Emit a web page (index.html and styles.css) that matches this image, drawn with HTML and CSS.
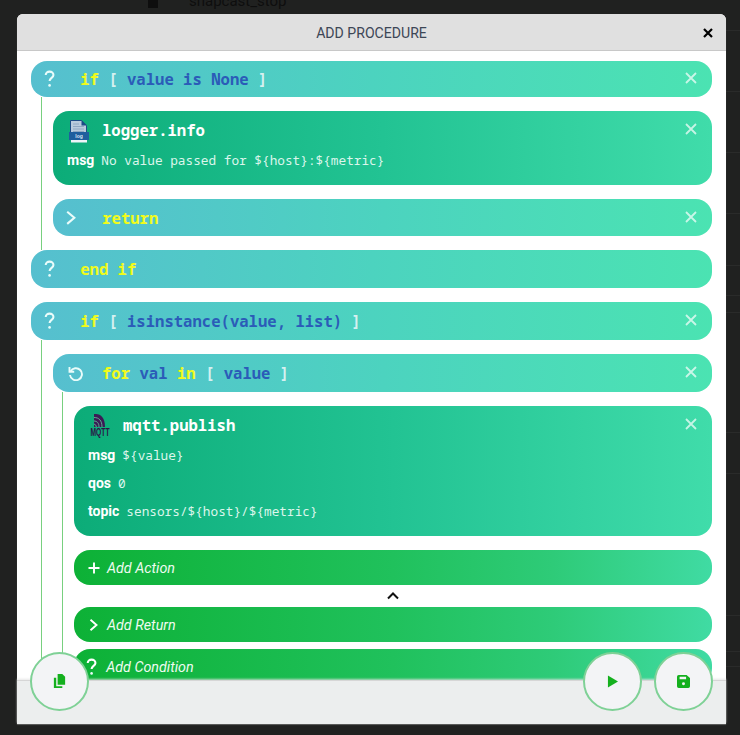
FILE: index.html
```html
<!DOCTYPE html>
<html lang="en">
<head>
    <meta charset="UTF-8">
    <title>Add Procedure</title>
    <link rel="stylesheet" href="styles.css">
</head>
<body>
    <div class="backdrop">
        <div class="backdrop-row first">
            <span class="backdrop-icon"></span>
            <span class="backdrop-name">snapcast_stop</span>
        </div>
        <div class="backdrop-row r61"></div>
        <div class="backdrop-row r61"></div>
        <div class="backdrop-row r61"></div>
        <div class="backdrop-row r52"></div>
        <div class="backdrop-row r30"></div>
        <div class="backdrop-row r17"></div>
        <div class="backdrop-row r120"></div>
        <div class="backdrop-row r41"></div>
        <div class="backdrop-row r142"></div>
        <div class="backdrop-row r36"></div>
        <div class="backdrop-row r15"></div>
    </div>

    <div class="modal">
        <div class="modal-header">
            <span class="modal-title">Add Procedure</span>
            <svg class="modal-close" viewBox="0 0 12 12"><path d="M2 2l8 8M10 2l-8 8"/></svg>
        </div>

        <div class="modal-body">
            <div class="block cond slim">
                <svg class="glyph" viewBox="0 0 12 16"><path d="M2.500 4.500C2.500 2.500 4 1.500 6 1.500s3.500 1 3.500 3c0 2.600-3.500 2.800-3.500 5.500"/><circle class="dot" cx="6" cy="14" r="1.200"/></svg>
                <div class="code"><span class="kw">if</span> <span class="br">[</span> <span class="val">value is None</span> <span class="br">]</span></div>
                <svg class="remove" viewBox="0 0 12 12"><path d="M1 1l10 10M11 1L1 11"/></svg>
            </div>
            <div class="nested">
                <div class="block action">
                    <div class="block-head">
                        <svg class="logo" viewBox="0 0 24 26">
                            <path d="M3.500 2.500h11l5 5v8h-16z" fill="#b9cbdd" stroke="#1c4d86"/>
                            <path d="M14.500 2v5.500H20z" fill="#1c4d86"/>
                            <path d="M6 6h6M6 8.500h11M6 11h11M6 13.500h11" stroke="#8fa8c2"/>
                            <rect x="2" y="14" width="20" height="8" fill="#1f5e9e"/>
                            <text class="log-text" x="12" y="20">log</text>
                            <rect x="4" y="22" width="16" height="2.500" fill="#eef4f8"/>
                        </svg>
                        <div class="code title">logger.info</div>
                    </div>
                    <div class="param"><b>msg</b> <span class="mono">No value passed for ${host}:${metric}</span></div>
                    <svg class="remove" viewBox="0 0 12 12"><path d="M1 1l10 10M11 1L1 11"/></svg>
                </div>
                <div class="block cond mid">
                    <svg class="glyph" viewBox="0 0 12 16"><path d="M2 2.500l6.500 5.500-6.500 5.500"/></svg>
                    <div class="code"><span class="kw">return</span></div>
                    <svg class="remove" viewBox="0 0 12 12"><path d="M1 1l10 10M11 1L1 11"/></svg>
                </div>
            </div>
            <div class="block cond">
                <svg class="glyph" viewBox="0 0 12 16"><path d="M2.500 4.500C2.500 2.500 4 1.500 6 1.500s3.500 1 3.500 3c0 2.600-3.500 2.800-3.500 5.500"/><circle class="dot" cx="6" cy="14" r="1.200"/></svg>
                <div class="code"><span class="kw">end if</span></div>
            </div>
            <div class="block cond">
                <svg class="glyph" viewBox="0 0 12 16"><path d="M2.500 4.500C2.500 2.500 4 1.500 6 1.500s3.500 1 3.500 3c0 2.600-3.500 2.800-3.500 5.500"/><circle class="dot" cx="6" cy="14" r="1.200"/></svg>
                <div class="code"><span class="kw">if</span> <span class="br">[</span> <span class="val">isinstance(value, list)</span> <span class="br">]</span></div>
                <svg class="remove" viewBox="0 0 12 12"><path d="M1 1l10 10M11 1L1 11"/></svg>
            </div>
            <div class="nested">
                <div class="block cond">
                    <svg class="glyph wide" viewBox="0 0 16 16"><path d="M3.600 6.500A6 6 0 1 1 3 10"/><path d="M2.500 2v4.700h4.700"/></svg>
                    <div class="code"><span class="kw">for</span> <span class="val">val</span> <span class="kw">in</span> <span class="br">[</span> <span class="val">value</span> <span class="br">]</span></div>
                    <svg class="remove" viewBox="0 0 12 12"><path d="M1 1l10 10M11 1L1 11"/></svg>
                </div>
                <div class="nested inner">
                    <div class="block action">
                        <div class="block-head">
                            <svg class="logo" viewBox="0 0 24 26">
                                <path d="M6 1h2c5 0 9 4 9 13h-11z" fill="#3b1a55"/>
                                <path d="M6 4.500c5 0 8 3 8 9.500M6 8c3 0 5 2 5 6M6 11.200c1.500 0 2 1 2.300 2.800" fill="none" stroke="#5fae8f" stroke-width="1"/>
                                <text class="mqtt-text" x="2.500" y="22.500" textLength="19" lengthAdjust="spacingAndGlyphs">MQTT</text>
                            </svg>
                            <div class="code title">mqtt.publish</div>
                        </div>
                        <div class="param"><b>msg</b> <span class="mono">${value}</span></div>
                        <div class="param"><b>qos</b> <span class="mono">0</span></div>
                        <div class="param"><b>topic</b> <span class="mono">sensors/${host}/${metric}</span></div>
                        <svg class="remove" viewBox="0 0 12 12"><path d="M1 1l10 10M11 1L1 11"/></svg>
                    </div>
                    <div class="block add">
                        <svg class="glyph small" viewBox="0 0 12 12"><path d="M6 0.500v11M0.500 6h11"/></svg>
                        <span class="add-label">Add Action</span>
                    </div>
                    <div class="caret-row">
                        <svg class="caret" viewBox="0 0 12 8"><path d="M1 6.500l5-5 5 5"/></svg>
                    </div>
                    <div class="block add">
                        <svg class="glyph small" viewBox="0 0 12 12"><path d="M2.500 0.800l6 5.200-6 5.200"/></svg>
                        <span class="add-label">Add Return</span>
                    </div>
                    <div class="block add">
                        <svg class="glyph tall" viewBox="0 0 12 16"><path d="M2.500 4.500C2.500 2.500 4 1.500 6 1.500s3.500 1 3.500 3c0 2.600-3.500 2.800-3.500 5.500"/><circle class="dot" cx="6" cy="14" r="1.200"/></svg>
                        <span class="add-label">Add Condition</span>
                    </div>
                </div>
            </div>
        </div>

        <div class="modal-footer"></div>

        <button class="fab fab-copy"><svg viewBox="0 0 14 16"><path d="M5 0h5l3 3v8.500H5z"/><path d="M1 4h2.500v9H10v2H1z"/></svg></button>
        <button class="fab fab-run"><svg viewBox="0 0 12 14"><path d="M1 0.500l11 6.500-11 6.500z"/></svg></button>
        <button class="fab fab-save"><svg viewBox="0 0 15 15"><path fill-rule="evenodd" d="M2 0h9l4 3.500V13a2 2 0 0 1-2 2H2a2 2 0 0 1-2-2V2a2 2 0 0 1 2-2zM3 2v3h7.500V2zM7.500 8.500a1.700 1.700 0 1 0 0 3.400 1.700 1.700 0 0 0 0-3.400z"/></svg></button>
    </div>
</body>
</html>
```

FILE: styles.css
```css
html, body {
    margin: 0;
    height: 735px;
    overflow: hidden;
}
body {
    background-color: #202120;
    font-family: Roboto, sans-serif;
}

/* page behind the dialog */
.backdrop-row {
    box-sizing: border-box;
    background: linear-gradient(90deg, transparent 20px, #2a2b2a 20px) bottom / 100% 1px no-repeat;
}
.backdrop-row.first {
    display: flex;
    align-items: flex-start;
    height: 37px;
    margin-top: -6px;
    padding-left: 148px;
    gap: 31px;
    color: #0e0e0e;
    font-size: 15px;
    line-height: 14px;
}
.backdrop-icon {
    width: 10px;
    height: 10px;
    margin-top: 4px;
    background: #0e0e0e;
}
.r15 { height: 15px; }
.r17 { height: 17px; }
.r30 { height: 30px; }
.r36 { height: 36px; }
.r41 { height: 41px; }
.r52 { height: 52px; }
.r61 { height: 61px; }
.r120 { height: 120px; }
.r142 { height: 142px; }

.modal {
    position: absolute;
    top: 14px;
    left: 17px;
    width: 709px;
    height: 710px;
    display: flex;
    flex-direction: column;
    background: white;
    border-radius: 6px 6px 0 0;
    box-shadow: 0 1px 1px rgba(255, 255, 255, 0.25);
}
.modal-header {
    flex: none;
    height: 36px;
    display: flex;
    align-items: center;
    justify-content: center;
    position: relative;
    background: #e0e0e0;
    border-bottom: 1px solid #c8c8c8;
    border-radius: 6px 6px 0 0;
}
.modal-title {
    margin-top: 2px;
    color: #3d4656;
    font-size: 14.100px;
    text-transform: uppercase;
}
.modal-close {
    position: absolute;
    top: 13px;
    right: 12px;
    width: 12px;
    height: 12px;
    fill: none;
    stroke: #000;
    stroke-width: 2.200;
}
.modal-body {
    flex: 1;
    min-height: 0;
    overflow: hidden;
    padding: 10px 14px 0;
}
.modal-footer {
    position: relative;
    flex: none;
    height: 43px;
    background: #eceeee;
    border-top: 1px solid #d6d6d6;
    box-shadow: 0 -1px 2px rgba(225, 225, 225, 0.8);
}

.block {
    position: relative;
    display: flex;
    align-items: center;
    border-radius: 16px;
    margin-bottom: 14px;
    color: white;
}
.block.cond {
    height: 38px;
    padding-left: 12px;
    background: linear-gradient(90deg, #56bfcf, #4cd3bf 50%, #4be3b2);
}
.block.cond.slim { height: 36px; }
.block.cond.mid { height: 37px; }
.block.action {
    display: block;
    padding: 6px 14px 11px;
    background: linear-gradient(90deg, #0cac78, #22c393 50%, #40dcaa);
}
.block.add {
    height: 35px;
    margin-bottom: 7px;
    padding-left: 14px;
    background: linear-gradient(90deg, #0db136, #20c15c 50%, #2ecb78 75%, #40dba3);
}
.block-head {
    display: flex;
    align-items: center;
    height: 26px;
    margin-bottom: 3px;
}
.nested {
    display: flow-root;
    margin: -14px 0 0 10px;
    padding: 14px 0 0 11px;
    border-left: 1px solid #78d07f;
}
.nested.inner {
    margin-left: 9px;
}

.code {
    margin-left: 24px;
    font-family: "Noto Sans Mono", "DejaVu Sans Mono", monospace;
    font-size: 15.600px;
    font-weight: bold;
    white-space: pre;
}
.kw { color: #f1fb1b; }
.br { color: #d6f0f0; }
.val { color: #2b5cb8; }
.code.title {
    margin-left: 11px;
    color: white;
}
.glyph {
    flex: none;
    width: 13.200px;
    height: 17.600px;
    fill: none;
    stroke: #eafcfa;
    stroke-width: 1.900;
}
.glyph.wide {
    width: 16px;
    height: 16px;
    margin-left: 2px;
    margin-right: -5px;
}
.glyph.small {
    width: 12px;
    height: 12px;
    stroke: white;
}
.glyph.tall {
    margin-left: -3px;
    margin-right: 1px;
    stroke: white;
}
.dot {
    fill: #eafcfa;
    stroke: none;
}
.remove {
    position: absolute;
    top: 12px;
    right: 15px;
    width: 12px;
    height: 12px;
    fill: none;
    stroke: rgba(255, 255, 255, 0.7);
    stroke-width: 1.800;
}
.slim .remove { top: 11px; }
.logo {
    flex: none;
    width: 24px;
    height: 26px;
    margin-top: 2px;
}
.log-text {
    font-family: "Liberation Sans", sans-serif;
    font-size: 5px;
    font-weight: bold;
    fill: #dbe8f4;
    text-anchor: middle;
}
.mqtt-text {
    font-family: "Liberation Sans", sans-serif;
    font-size: 10px;
    font-weight: bold;
    fill: #2c1245;
}
.param {
    display: flex;
    gap: 7px;
    align-items: baseline;
    height: 28px;
    line-height: 28px;
    font-size: 14px;
}
.mono {
    font-family: "Noto Sans Mono", "DejaVu Sans Mono", monospace;
    font-size: 12.750px;
    color: #dcf6ec;
}
.add-label {
    margin-left: 7px;
    font-size: 14.300px;
    font-style: italic;
    color: #eefbf0;
}
.caret-row {
    display: flex;
    justify-content: center;
    height: 15px;
}
.caret {
    width: 12px;
    height: 8px;
    fill: none;
    stroke: #111;
    stroke-width: 2;
}

.fab {
    position: absolute;
    top: 638px;
    box-sizing: border-box;
    width: 59px;
    height: 59px;
    padding: 0;
    display: flex;
    align-items: center;
    justify-content: center;
    background: #f3f4f6;
    border: 2px solid #7fd196;
    border-radius: 50%;
}
.fab svg {
    height: 15px;
    width: 15px;
    fill: #14b01e;
}
.fab-copy { left: 13px; }
.fab-run { left: 566px; }
.fab-save { left: 637px; }
.fab-run svg { width: 11px; height: 13px; }
.fab-save svg { width: 13px; height: 13px; }
```
